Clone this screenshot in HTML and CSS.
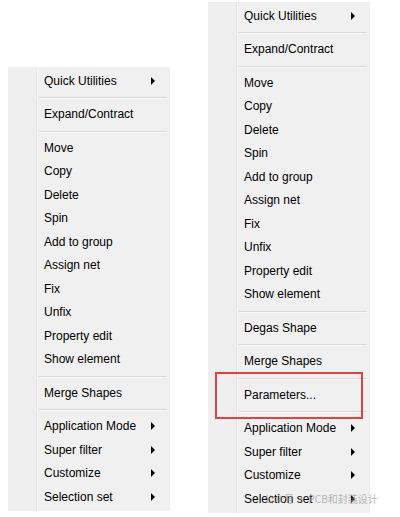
FILE: index.html
```html
<!DOCTYPE html>
<html>
<head>
<meta charset="utf-8">
<link rel="stylesheet" href="styles.css">
</head>
<body>
<div class="page">
  <div class="menu menu-left">
    <div class="item">Quick Utilities<span class="arrow"></span></div>
    <div class="sep"></div>
    <div class="item">Expand/Contract</div>
    <div class="sep"></div>
    <div class="item">Move</div>
    <div class="item">Copy</div>
    <div class="item">Delete</div>
    <div class="item">Spin</div>
    <div class="item">Add to group</div>
    <div class="item">Assign net</div>
    <div class="item">Fix</div>
    <div class="item">Unfix</div>
    <div class="item">Property edit</div>
    <div class="item">Show element</div>
    <div class="sep"></div>
    <div class="item">Merge Shapes</div>
    <div class="sep"></div>
    <div class="item">Application Mode<span class="arrow"></span></div>
    <div class="item">Super filter<span class="arrow"></span></div>
    <div class="item">Customize<span class="arrow"></span></div>
    <div class="item">Selection set<span class="arrow"></span></div>
  </div>
  <div class="menu menu-right">
    <div class="item">Quick Utilities<span class="arrow"></span></div>
    <div class="sep"></div>
    <div class="item">Expand/Contract</div>
    <div class="sep"></div>
    <div class="item">Move</div>
    <div class="item">Copy</div>
    <div class="item">Delete</div>
    <div class="item">Spin</div>
    <div class="item">Add to group</div>
    <div class="item">Assign net</div>
    <div class="item">Fix</div>
    <div class="item">Unfix</div>
    <div class="item">Property edit</div>
    <div class="item">Show element</div>
    <div class="sep"></div>
    <div class="item">Degas Shape</div>
    <div class="sep"></div>
    <div class="item">Merge Shapes</div>
    <div class="sep"></div>
    <div class="item">Parameters...</div>
    <div class="sep"></div>
    <div class="item">Application Mode<span class="arrow"></span></div>
    <div class="item">Super filter<span class="arrow"></span></div>
    <div class="item">Customize<span class="arrow"></span></div>
    <div class="item">Selection set<span class="arrow"></span></div>
    <div class="highlight"></div>
    <div class="watermark">公众号 · PCB和封装设计</div>
  </div>
</div>
</body>
</html>
```
FILE: styles.css
```css
html, body {
  margin: 0;
  padding: 0;
  background: #ffffff;
}
.page {
  display: flex;
  align-items: flex-start;
  gap: 38px;
  padding: 2px 0 0 8px;
  font-family: "Liberation Sans", Arial, sans-serif;
  font-size: 12px;
  color: #000;
}
.menu {
  position: relative;
  width: 162px;
  padding: 2px 0;
  background: linear-gradient(to right, #efefef 0, #efefef 28px, #e4e4e4 28px, #e4e4e4 29px, #f7f7f7 29px, #f7f7f7 30px, #f0f0f0 30px);
}
.menu-left {
  margin-top: 65px;
}
.item {
  display: flex;
  align-items: center;
  height: 23.5px;
  padding-left: 36px;
  white-space: nowrap;
}
.arrow {
  margin-left: auto;
  margin-right: 15px;
  width: 0;
  height: 0;
  border-top: 4px solid transparent;
  border-bottom: 4px solid transparent;
  border-left: 4px solid #000;
}
.sep {
  height: 10px;
  display: flex;
  align-items: center;
  padding-left: 31px;
  padding-right: 3px;
}
.sep::before {
  content: "";
  flex: 1;
  height: 1px;
  background: #d9d9d9;
  box-shadow: 0 1px 0 #fafafa;
}
.highlight {
  position: absolute;
  left: 7px;
  top: 370px;
  width: 144px;
  height: 43px;
  border: 2px solid #d94444;
}
.watermark {
  position: absolute;
  left: 56px;
  top: 489px;
  font-family: "Noto Sans CJK SC", sans-serif;
  font-size: 10px;
  color: rgba(150, 150, 150, 0.7);
  white-space: nowrap;
}
```
